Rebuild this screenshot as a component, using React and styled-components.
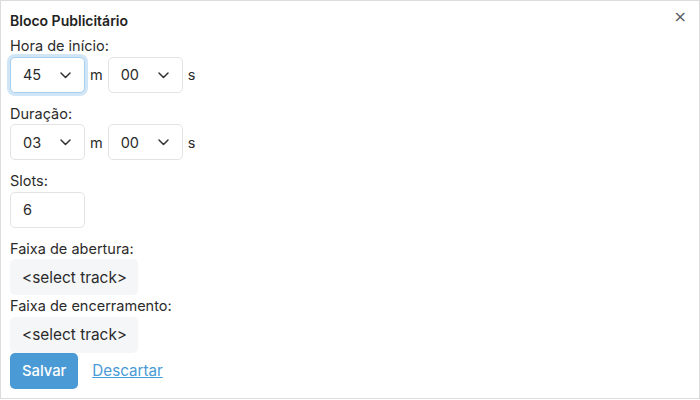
import React from "react";
import styled, { createGlobalStyle } from "styled-components";

const Global = createGlobalStyle`
  html, body { margin: 0; padding: 0; background: #fff; }
  body { font-family: Inter, "Noto Sans", sans-serif; color: #2b2b2b; }
  * { box-sizing: border-box; }
`;

const Panel = styled.div`
  position: relative;
  width: 700px;
  height: 399px;
  border: 1px solid #dcdcdc;
  padding: 9px 9px 0 9px;
  display: flex;
  flex-direction: column;
`;

const Title = styled.div`
  font-size: 14px;
  font-weight: 600;
  line-height: 22px;
  color: #222;
  margin-bottom: 3px;
`;

const Close = styled.button`
  position: absolute;
  top: 6px;
  right: 12px;
  border: none;
  background: none;
  padding: 0;
  font-family: "DejaVu Sans", sans-serif;
  font-size: 16px;
  line-height: 20px;
  color: #5a5f66;
  cursor: pointer;
`;

const Label = styled.div`
  font-size: 14.5px;
  line-height: 21.5px;
  color: #2b2b2b;
`;

const Field = styled.div`
  display: flex;
  flex-direction: column;
  margin-bottom: ${(p) => (p.$gap ? "10px" : "0")};
`;

const Row = styled.div`
  display: flex;
  align-items: center;
  gap: 5px;
`;

const Unit = styled.span`
  font-size: 14.5px;
  color: #2b2b2b;
`;

const SelectWrap = styled.div`
  position: relative;
  width: 75px;
  height: 36px;
`;

const Select = styled.select`
  appearance: none;
  width: 100%;
  height: 100%;
  border: 1px solid ${(p) => (p.$focus ? "#a9d0ee" : "#e3e3e3")};
  box-shadow: ${(p) => (p.$focus ? "0 0 0 3px rgba(120, 180, 230, 0.35)" : "none")};
  border-radius: 5px;
  background: #fff;
  font-family: Inter, sans-serif;
  font-size: 14.5px;
  color: #2b2b2b;
  padding: 0 0 0 12px;
  outline: none;
`;

const Chevron = styled.svg`
  position: absolute;
  right: 14px;
  top: 15px;
  pointer-events: none;
`;

const Input = styled.input`
  width: 75px;
  height: 36px;
  border: 1px solid #e3e3e3;
  border-radius: 5px;
  font-family: Inter, sans-serif;
  font-size: 14.5px;
  color: #2b2b2b;
  padding: 0 12px;
  outline: none;
`;

const TrackButton = styled.button`
  align-self: flex-start;
  height: 36px;
  border: none;
  border-radius: 5px;
  background: #f5f6f8;
  font-family: Inter, sans-serif;
  font-size: 15.4px;
  color: #2b2b2b;
  padding: 0 11px 0 12px;
`;

const Actions = styled.div`
  display: flex;
  align-items: center;
  gap: 14px;
`;

const Save = styled.button`
  height: 36px;
  border: none;
  border-radius: 5px;
  background: #4a9ad5;
  color: #fff;
  font-family: Inter, sans-serif;
  font-size: 14.8px;
  font-weight: 500;
  padding: 0 12px;
`;

const Discard = styled.a`
  font-size: 15.2px;
  color: #4a9ad5;
  text-decoration: underline;
  cursor: pointer;
`;

const TimeSelect = ({ value, focus }) => (
  <SelectWrap>
    <Select $focus={focus} defaultValue={value}>
      <option>{value}</option>
    </Select>
    <Chevron width="11" height="7" viewBox="0 0 11 7">
      <path d="M1 1l4.5 4.5L10 1" fill="none" stroke="#333" strokeWidth="1.5" strokeLinecap="round" strokeLinejoin="round" />
    </Chevron>
  </SelectWrap>
);

export default function App() {
  return (
    <>
      <Global />
      <Panel>
        <Title>Bloco Publicitário</Title>
        <Close aria-label="close">×</Close>
        <Field $gap>
          <Label>Hora de início:</Label>
          <Row>
            <TimeSelect value="45" focus />
            <Unit>m</Unit>
            <TimeSelect value="00" />
            <Unit>s</Unit>
          </Row>
        </Field>
        <Field $gap>
          <Label>Duração:</Label>
          <Row>
            <TimeSelect value="03" />
            <Unit>m</Unit>
            <TimeSelect value="00" />
            <Unit>s</Unit>
          </Row>
        </Field>
        <Field $gap>
          <Label>Slots:</Label>
          <Input defaultValue="6" />
        </Field>
        <Field>
          <Label>Faixa de abertura:</Label>
          <TrackButton>&lt;select track&gt;</TrackButton>
        </Field>
        <Field>
          <Label>Faixa de encerramento:</Label>
          <TrackButton>&lt;select track&gt;</TrackButton>
        </Field>
        <Actions>
          <Save>Salvar</Save>
          <Discard>Descartar</Discard>
        </Actions>
      </Panel>
    </>
  );
}
